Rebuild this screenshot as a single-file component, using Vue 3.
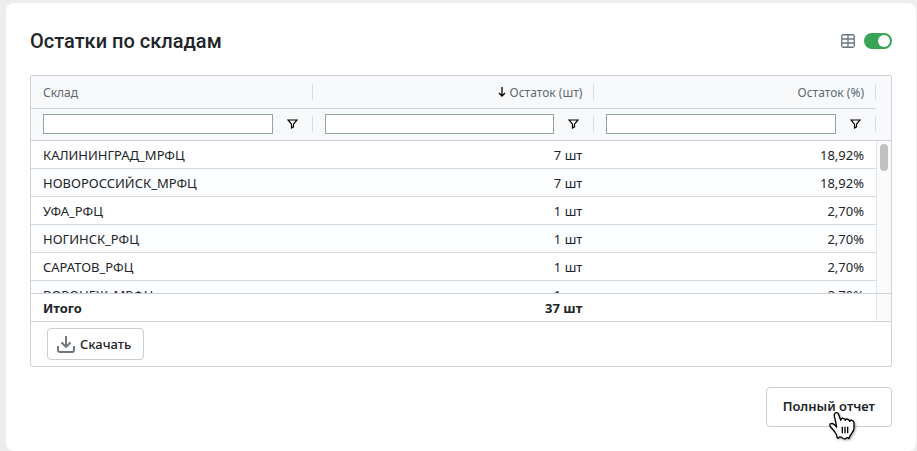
<template>
  <section class="card">
    <header class="card-header">
      <h2>Остатки по складам</h2>
      <label class="view-switch">
        <svg class="icon-table" viewBox="0 0 14 14" role="img" aria-label="Таблица">
          <rect x="0.75" y="0.75" width="12.5" height="12.5" rx="1.5" />
          <path d="M7 1v12M1 5h12M1 9h12" />
        </svg>
        <input v-model="asTable" type="checkbox" />
      </label>
    </header>

    <div class="grid">
      <div class="grid-main">
        <table>
          <thead>
            <tr class="row-head">
              <th v-for="col in columns" :key="col.key" :class="{ num: col.num }">
                <svg v-if="col.sorted" class="icon-sort" viewBox="0 0 8 10">
                  <path d="M4 0v9M1 6l3 3l3-3" />
                </svg>
                <span>{{ col.title }}</span>
              </th>
            </tr>
            <tr class="row-filter">
              <th v-for="col in columns" :key="col.key">
                <input v-model="filters[col.key]" type="text" :aria-label="col.title" />
                <button type="button" class="btn-filter" :aria-label="'Фильтр: ' + col.title">
                  <svg viewBox="0 0 11 10">
                    <path d="M1 1h9L6.5 5.2v2.6L4.5 9V5.2z" />
                  </svg>
                </button>
              </th>
            </tr>
          </thead>
          <tbody>
            <tr v-for="row in visibleRows" :key="row.name">
              <td>{{ row.name }}</td>
              <td class="num">{{ row.count }} шт</td>
              <td class="num">{{ row.percent }}%</td>
            </tr>
          </tbody>
          <tfoot>
            <tr>
              <td>Итого</td>
              <td class="num">37 шт</td>
              <td></td>
            </tr>
          </tfoot>
        </table>
        <div class="side">
          <div class="side-head"></div>
          <div class="side-track"><div class="side-thumb"></div></div>
          <div class="side-foot"></div>
        </div>
      </div>
      <div class="status-bar">
        <button type="button" class="btn btn-download">
          <svg class="icon-download" viewBox="0 0 18 18">
            <path d="M9 1v11M4.5 7.5L9 12l4.5-4.5M1 11v4a2 2 0 0 0 2 2h12a2 2 0 0 0 2-2v-4" />
          </svg>
          <span>Скачать</span>
        </button>
      </div>
    </div>

    <footer class="card-footer">
      <button type="button" class="btn btn-report">
        Полный отчет
        <svg class="pointer" viewBox="0 0 84 90">
          <path class="hand" d="M17 8Q22 2 28 8L35 28Q36 21 42 22Q48 23 49 28Q51 22 57 25Q61 27 62 31Q64 27 69 28Q75 30 75 36V52Q75 58 68 67L62 76L60 83Q55 77 50 83Q43 85 39 80Q33 74 27 82L24 79Q24 72 18 63L5 48Q0 41 5 38Q10 36 16 41L23 48Q21 34 17 20Q15 13 17 8Z" />
          <path class="lines" d="M40 47v20M48 47v20M56 47v20" />
        </svg>
      </button>
    </footer>
  </section>
</template>

<script setup>
import { computed, reactive, ref } from 'vue';

const asTable = ref(true)

const columns = [
  { key: 'name', title: 'Склад' },
  { key: 'count', title: 'Остаток (шт)', num: true, sorted: true },
  { key: 'percent', title: 'Остаток (%)', num: true },
]

const rows = [
  { name: 'КАЛИНИНГРАД_МРФЦ', count: 7, percent: '18,92' },
  { name: 'НОВОРОССИЙСК_МРФЦ', count: 7, percent: '18,92' },
  { name: 'УФА_РФЦ', count: 1, percent: '2,70' },
  { name: 'НОГИНСК_РФЦ', count: 1, percent: '2,70' },
  { name: 'САРАТОВ_РФЦ', count: 1, percent: '2,70' },
  { name: 'ВОРОНЕЖ_МРФЦ', count: 1, percent: '2,70' },
]

const filters = reactive({ name: '', count: '', percent: '' })

const visibleRows = computed(() =>
  rows.filter((row) =>
    columns.every((col) => String(row[col.key]).toLowerCase().includes(filters[col.key].toLowerCase()))
  )
)
</script>

<style>
body {
  margin: 0;
  background: #ededed;
}
</style>

<style scoped>
* {
  box-sizing: border-box;
}
.card {
  margin: 3px 1px 0 6px;
  padding: 24px;
  border-radius: 8px;
  background: #fff;
  color: #212529;
  font-family: 'Noto Sans', sans-serif;
  font-size: 13px;
}
.card-header {
  display: flex;
  align-items: center;
  justify-content: space-between;
  margin-bottom: 20px;
}
.card-header h2 {
  margin: 0;
  font: 500 20px/28px Roboto, sans-serif;
}
svg {
  display: block;
  fill: none;
}
.view-switch {
  display: flex;
  align-items: center;
  gap: 9px;
}
.icon-table {
  width: 14px;
  height: 14px;
  stroke: #6c757d;
  stroke-width: 1.3;
}
.view-switch input {
  appearance: none;
  display: flex;
  align-items: center;
  width: 28px;
  height: 16px;
  margin: 0;
  padding: 2px;
  border-radius: 8px;
  background: #adb5bd;
}
.view-switch input::before {
  content: '';
  width: 12px;
  height: 12px;
  border-radius: 50%;
  background: #fff;
}
.view-switch input:checked {
  justify-content: flex-end;
  background: #38a556;
}

/* grid */
.grid {
  border: 1px solid #cdd2da;
  border-radius: 2px;
}
.grid-main {
  display: flex;
}
table {
  display: flex;
  flex-direction: column;
  flex: 1;
  min-width: 0;
}
thead,
tbody,
tfoot {
  display: block;
}
tr {
  display: grid;
  grid-template-columns: repeat(3, 1fr);
}
th,
td {
  min-width: 0;
  padding: 0 12px;
  text-align: left;
}
.num {
  justify-content: flex-end;
  text-align: right;
}
thead tr {
  background: #f8f9fb;
  border-bottom: 1px solid #cdd2da;
}
thead th {
  display: flex;
  align-items: center;
  color: #5f6872;
  font-size: 12px;
  font-weight: 400;
}
thead th::after {
  content: '';
  flex: none;
  width: 1px;
  height: 16px;
  margin-right: -12px;
  margin-left: 11px;
  background: #d8dce1;
}
.row-head {
  height: 33px;
}
.row-head th:not(.num) {
  justify-content: space-between;
}
.row-filter {
  height: 32px;
}
.row-filter th {
  padding-bottom: 2px;
}
.row-filter th::after {
  margin-left: 14px;
}
.icon-sort {
  width: 8px;
  height: 10px;
  margin-right: 4px;
  stroke: #000;
  stroke-width: 1.3;
}
.row-filter input {
  flex: 1;
  min-width: 0;
  height: 20px;
  padding: 0 4px;
  border: 1px solid #95a5a6;
  background: #fff;
  font: inherit;
  outline: none;
}
.btn-filter {
  margin-left: 14px;
  padding: 0;
  border: 0;
  background: none;
}
.btn-filter svg {
  width: 11px;
  height: 10px;
  stroke: #000;
  stroke-width: 1.2;
}
tbody {
  height: 152px;
  overflow: hidden;
}
tbody tr {
  border-bottom: 1px solid #d5d9de;
}
tbody tr:nth-child(even) {
  background: #fcfdfe;
}
tbody td,
tfoot td {
  padding-top: 2px;
  line-height: 25px;
}
tfoot {
  border-top: 1px solid #cdd2da;
  font-weight: 700;
}
.side {
  display: flex;
  flex-direction: column;
  width: 15px;
}
.side-head {
  height: 65px;
  border-bottom: 1px solid #cdd2da;
  background: #f8f9fb;
}
.side-track {
  flex: 1;
  padding: 3px;
  border-left: 1px solid #e3e5e8;
  background: #fafafa;
}
.side-thumb {
  width: 8px;
  height: 27px;
  border-radius: 4px;
  background: #c1c1c1;
}
.side-foot {
  height: 28px;
  border-top: 1px solid #cdd2da;
  border-left: 1px solid #e3e5e8;
  background: #fafafa;
}
.status-bar {
  padding: 6px 16px;
  border-top: 1px solid #cdd2da;
}

/* buttons */
.btn {
  display: flex;
  align-items: center;
  border: 1px solid #c9ccd1;
  border-radius: 4px;
  background: #fff;
  color: #212529;
  font: 500 13px 'Noto Sans', sans-serif;
}
.btn-download {
  height: 32px;
  gap: 5px;
  padding: 0 12px 0 9px;
}
.icon-download {
  width: 18px;
  height: 18px;
  stroke: #6c757d;
  stroke-width: 1.9;
}
.card-footer {
  display: flex;
  justify-content: flex-end;
  margin-top: 20px;
}
.btn-report {
  position: relative;
  height: 40px;
  padding: 0 16px 2px;
  font-weight: 600;
}
.pointer {
  position: absolute;
  top: 23px;
  right: 34px;
  width: 28px;
  height: 30px;
  filter: drop-shadow(1px 1px 1px rgba(0, 0, 0, 0.35));
}
.hand {
  fill: #fff;
  stroke: #000;
  stroke-width: 4;
  stroke-linejoin: round;
}
.lines {
  stroke: #000;
  stroke-width: 4;
}
</style>
